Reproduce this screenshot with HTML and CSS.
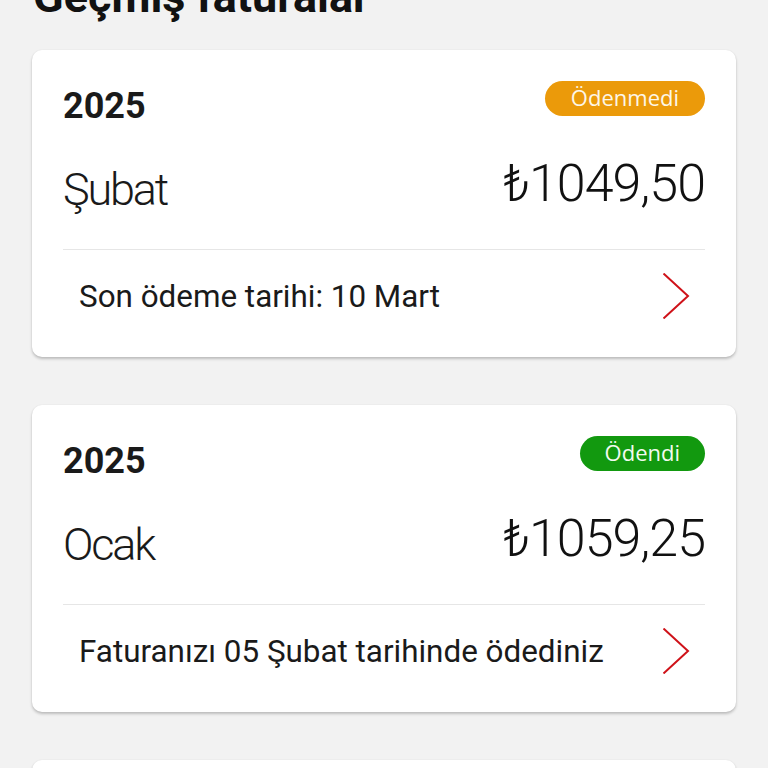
FILE: index.html
```html
<!DOCTYPE html>
<html lang="tr">
<head>
<meta charset="utf-8">
<title>Geçmiş faturalar</title>
<link rel="stylesheet" href="styles.css">
</head>
<body>
<main class="page">
  <h1 class="title">Geçmiş faturalar</h1>
  <section class="bill-list">
    <article class="bill-card">
      <div class="bill-body">
        <div class="bill-head">
          <span class="bill-year">2025</span>
          <span class="badge badge-unpaid">Ödenmedi</span>
        </div>
        <div class="bill-main">
          <span class="bill-month">Şubat</span>
          <span class="bill-amount">₺1049,50</span>
        </div>
        <div class="bill-foot">
          <span class="bill-note">Son ödeme tarihi: 10 Mart</span>
          <svg class="chevron" width="28" height="46" viewBox="0 0 28 46" aria-hidden="true"><polyline points="1.5,0.5 26,23 1.5,45.5" /></svg>
        </div>
      </div>
    </article>
    <article class="bill-card">
      <div class="bill-body">
        <div class="bill-head">
          <span class="bill-year">2025</span>
          <span class="badge badge-paid">Ödendi</span>
        </div>
        <div class="bill-main">
          <span class="bill-month">Ocak</span>
          <span class="bill-amount">₺1059,25</span>
        </div>
        <div class="bill-foot">
          <span class="bill-note">Faturanızı 05 Şubat tarihinde ödediniz</span>
          <svg class="chevron" width="28" height="46" viewBox="0 0 28 46" aria-hidden="true"><polyline points="1.5,0.5 26,23 1.5,45.5" /></svg>
        </div>
      </div>
    </article>
    <article class="bill-card">
      <div class="bill-body">
        <div class="bill-head">
          <span class="bill-year">2024</span>
          <span class="badge badge-paid">Ödendi</span>
        </div>
        <div class="bill-main">
          <span class="bill-month">Aralık</span>
          <span class="bill-amount">₺1038,75</span>
        </div>
        <div class="bill-foot">
          <span class="bill-note">Faturanızı 06 Ocak tarihinde ödediniz</span>
          <svg class="chevron" width="28" height="46" viewBox="0 0 28 46" aria-hidden="true"><polyline points="1.5,0.5 26,23 1.5,45.5" /></svg>
        </div>
      </div>
    </article>
  </section>
</main>
</body>
</html>
```
FILE: styles.css
```css
html, body {
  margin: 0;
  padding: 0;
  background: #f2f2f2;
  overflow: hidden;
}

body {
  font-family: Roboto, "Liberation Sans", sans-serif;
  color: #1a1a1a;
}

.page {
  padding: 0 32px;
}

.title {
  margin: -30px 0 26px 1px;
  font-size: 45px;
  line-height: 54px;
  font-weight: 700;
  color: #111;
}

.bill-list {
  display: flex;
  flex-direction: column;
  gap: 48px;
}

.bill-card {
  background: #fff;
  border-radius: 10px;
  box-shadow: 0 2px 3px rgba(0, 0, 0, 0.22), 0 0 2px rgba(0, 0, 0, 0.06);
}

.bill-body {
  padding: 31px 31px 0;
}

.bill-head {
  display: flex;
  justify-content: space-between;
  align-items: flex-start;
}

.bill-year {
  margin-top: 4px;
  font-size: 36px;
  line-height: 42px;
  font-weight: 700;
  color: #1a1a1a;
}

.badge {
  height: 35px;
  box-sizing: border-box;
  padding: 0 25px 2px;
  border-radius: 18px;
  font-family: "Open Sans", sans-serif;
  font-weight: 400;
  font-size: 22px;
  line-height: 33px;
  color: #fdf6e8;
}

.badge-unpaid {
  background: #eb9a0a;
  padding: 0 26px 2px;
}

.badge-paid {
  background: #12990f;
  color: #f2fbf0;
}

.bill-main {
  margin-top: 36px;
  display: flex;
  justify-content: space-between;
  align-items: flex-start;
}

.bill-month {
  font-size: 45px;
  line-height: 54px;
  font-weight: 300;
  letter-spacing: -2.2px;
  color: #1a1a1a;
}

.bill-amount {
  margin-top: -6px;
  font-size: 52px;
  line-height: 54px;
  font-weight: 300;
  letter-spacing: -1px;
  color: #111;
}

.bill-foot {
  margin-top: 32px;
  border-top: 1px solid #e6e6e6;
  padding: 23px 15px 38px 16px;
  display: flex;
  justify-content: space-between;
  align-items: center;
}

.bill-note {
  font-size: 31.4px;
  line-height: 44px;
  padding-top: 2px;
  font-weight: 400;
  color: #1a1a1a;
}

.chevron {
  display: block;
  fill: none;
  stroke: #cf1219;
  stroke-width: 2;
}
```
